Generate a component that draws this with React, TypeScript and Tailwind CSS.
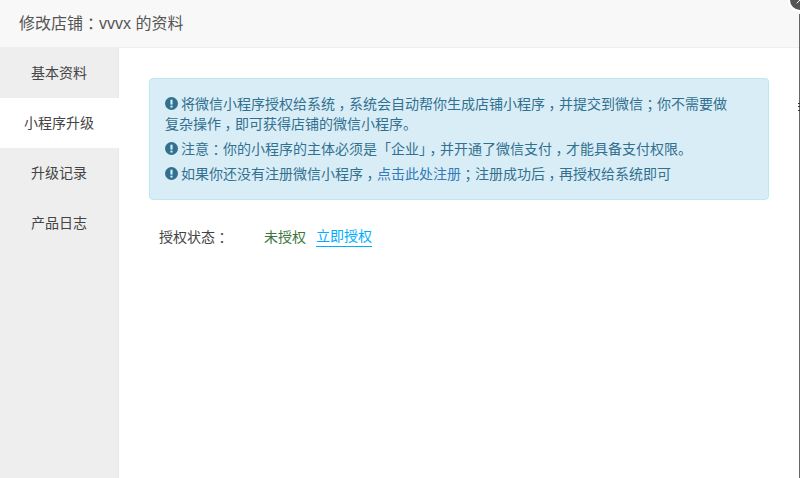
import { X } from "lucide-react";

const tabs = ["基本资料", "小程序升级", "升级记录", "产品日志"];

const Alert = () => (
    <svg viewBox="0 0 24 24" className="w-[13px] h-[13px] inline-block align-[-1px] mr-[3px]">
        <circle cx="12" cy="12" r="12" fill="#31708f" />
        <rect x="10" y="5" width="4" height="9" fill="#d9edf7" />
        <rect x="10" y="16" width="4" height="3.5" fill="#d9edf7" />
    </svg>
);

// 标点居中，和截图里的字体一样
const P = ({ c }: { c: string }) => <span className="[font-feature-settings:'halt'] px-[3.5px]">{c}</span>;

const App = () => {
    return (
        <div className="relative w-[800px] h-[478px] overflow-hidden bg-white flex flex-col text-[14px] text-[#444] font-['Liberation_Sans','Noto_Sans_CJK_SC',sans-serif]">
            <div className="h-[48px] shrink-0 bg-[#f8f8f8] border-b border-[#eee] pl-[19px] text-[16px] leading-[47px] text-[#555]">
                修改店铺<span className="[font-feature-settings:'halt'] px-[4px]">：</span>vvvx 的资料
            </div>

            <div className="flex flex-1 min-h-0">
                <div className="w-[119px] shrink-0 bg-[#eee] border-r border-[#e7e7e7]">
                    {tabs.map((t, i) => (
                        <div
                            key={t}
                            className={i === 1 ? "h-[50px] leading-[50px] text-center bg-white w-[119px] pr-px" : "h-[50px] leading-[50px] text-center"}
                        >
                            {t}
                        </div>
                    ))}
                </div>

                <div className="flex-1 pt-[30px] pl-[30px] pr-[30px]">
                    <div className="w-[620px] h-[122px] rounded-[4px] border border-[#bce8f1] bg-[#d9edf7] text-[#31708f] pt-[15px] pl-[15px] pr-[30px] leading-[20px]">
                        <p className="mb-[5px]">
                            <Alert />将微信小程序授权给系统<P c="，" />系统会自动帮你生成店铺小程序<P c="，" />并提交到微信<P c="；" />你不需要做复杂操作<P c="，" />即可获得店铺的微信小程序。
                        </p>
                        <p className="mb-[5px]">
                            <Alert />注意<P c="：" />你的小程序的主体必须是「企业」<P c="，" />并开通了微信支付<P c="，" />才能具备支付权限。
                        </p>
                        <p>
                            <Alert />如果你还没有注册微信小程序<P c="，" /><span className="text-[#337ab7]">点击此处注册</span><P c="；" />注册成功后<P c="，" />再授权给系统即可
                        </p>
                    </div>

                    <div className="flex items-center mt-[27px] pl-[10px] h-[20px]">
                        <span className="w-[105px]">授权状态<P c="：" /></span>
                        <span className="text-[#3c763d]">未授权</span>
                        <span className="ml-[10px] text-[#00aeff] border-b border-[#00aeff] leading-[19px]">立即授权</span>
                    </div>
                </div>
            </div>

            <div className="absolute top-[-12px] right-[-12px] w-[24px] h-[24px] rounded-full bg-[#555] border-2 border-white flex items-center justify-center">
                <X className="w-[12px] h-[12px] text-white" />
            </div>
            <div className="absolute top-[14px] bottom-0 right-0 w-px bg-[#666]" />
            <div className="absolute top-[103px] right-0 w-[2px] h-px bg-[#333]" />
            <div className="absolute top-[106px] right-0 w-[2px] h-px bg-[#333]" />
            <div className="absolute top-[110px] right-0 w-[2px] h-px bg-[#333]" />
        </div>
    );
};

export default App;
